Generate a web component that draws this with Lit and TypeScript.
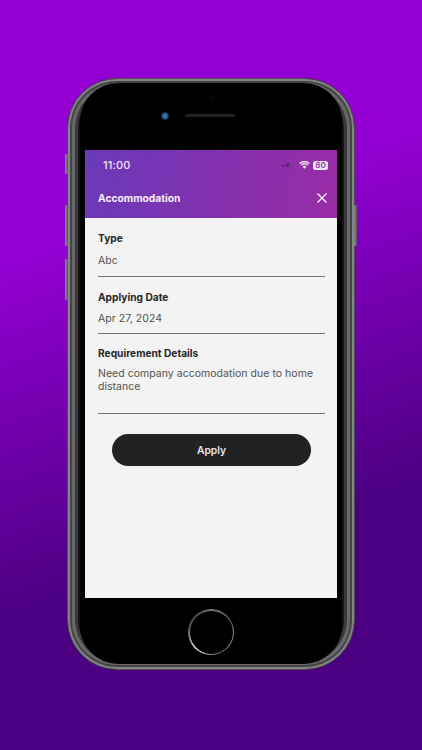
import { LitElement, html, css } from "lit";
import { customElement } from "lit/decorators.js";

@customElement("app-root")
export class AppRoot extends LitElement {
  static styles = css`
    :host {
      display: block;
      width: 422px;
      height: 750px;
      overflow: hidden;
      background: linear-gradient(162deg, #9400d3 0%, #9400d3 30%, #4b0082 70%, #4b0082 100%);
      font-family: Inter, "Open Sans", sans-serif;
    }
    .page { display: flex; justify-content: center; padding-top: 78px; }
    .phone {
      position: relative;
      box-sizing: border-box;
      width: 288px;
      height: 592px;
      border-radius: 50px;
      background: #000;
      border: 1px solid #4e4e50;
      box-shadow: inset 0 0 0 2px #858587, inset 0 0 0 4px #454547, inset 0 0 0 7px #68686a, inset 0 0 0 10px #3a3a3c, inset 0 0 0 12px #141414;
      padding: 71px 17px 0;
    }
    .phone::before {
      content: "";
      position: absolute;
      left: 12px;
      right: 12px;
      top: 4px;
      bottom: 5px;
      border-radius: 38px;
      background: #000;
    }
    .btn {
      position: absolute;
      width: 3px;
      background: linear-gradient(90deg, #8b8b90, #55555a);
      border-radius: 1px;
    }
    .b1 { left: -3px; top: 75px; height: 20px; }
    .b2 { left: -3px; top: 126px; height: 41px; }
    .b3 { left: -3px; top: 180px; height: 41px; }
    .b4 { right: -3px; top: 126px; height: 41px; }
    .cam {
      position: absolute; left: 93px; top: 33px; width: 8px; height: 8px;
      border-radius: 50%;
      background: radial-gradient(circle, #3a78b0 0 25%, #10243a 70%);
    }
    .speaker {
      position: absolute; left: 117px; top: 35px; width: 50px; height: 3px;
      border-radius: 2px; background: #222223;
    }
    .dot {
      position: absolute; left: 141px; top: 16px; width: 4px; height: 4px;
      border-radius: 50%; background: #060608; border: 1px solid #0e0e10;
    }
    .home {
      position: absolute; left: 120px; bottom: 14px; width: 46px; height: 46px;
      box-sizing: border-box; border-radius: 50%;
      background: conic-gradient(#777 0deg, #555 60deg, #aaa 110deg, #777 150deg, #999 190deg, #ddd 225deg, #555 280deg, #444 330deg, #777 360deg);
    }
    .home::after {
      content: ""; position: absolute; inset: 1.5px; border-radius: 50%; background: #000;
    }
    .screen {
      position: relative;
      width: 252px; height: 448px; background: #f3f3f3; display: flex; flex-direction: column;
    }
    .head {
      height: 68px; box-sizing: border-box;
      background: linear-gradient(100deg, #6a3ab8 0%, #8430ae 55%, #9a2ca6 100%);
      color: #fff; padding: 9px 9px 0 13px;
      display: flex; flex-direction: column;
    }
    .status { display: flex; align-items: center; height: 12px; padding-left: 5px; gap: 3px; }
    .time { font-size: 11px; font-weight: 500; flex: 1; letter-spacing: 0.2px; color: #ece6f5; }
    .bars { display: flex; align-items: flex-end; gap: 1px; height: 4px; margin-right: 5px; }
    .bars i { width: 1.5px; background: #4a2a6a; display: block; }
    .h2 { height: 2px; }
    .h3 { height: 3px; }
    .h4 { height: 4px; }
    .faint { height: 1px; opacity: 0.5; }
    .battery {
      font-size: 8px; font-weight: 600; color: #8a3ab0; background: #f1e4f4;
      border-radius: 2.5px; width: 15px; height: 9px; line-height: 9px; text-align: center;
    }
    .title-row { display: flex; align-items: center; justify-content: space-between; margin-top: 21px; }
    .title { font-size: 10.3px; font-weight: 700; letter-spacing: -0.02px; color: #f4eef8; }
    .close { width: 12px; height: 12px; display: block; }
    .form { padding: 14px 12px 0 13px; display: flex; flex-direction: column; }
    .field { border-bottom: 1px solid #747474; }
    .label { font-size: 10.2px; font-weight: 700; color: #282828; line-height: 13px; }
    .value { font-size: 10.5px; color: #525252; line-height: 13px; letter-spacing: 0.03px; }
    .f1 { height: 44px; }
    .f1 .value { margin-top: 9px; }
    .f2 { height: 42px; margin-top: 14px; }
    .f2 .value { margin-top: 8px; }
    .f3 { height: 66px; margin-top: 13px; }
    .f3 .value { margin-top: 7px; }
    .apply {
      margin: 20px 26px 0 27px; height: 32px; border-radius: 16px; background: #222;
      color: #e8e8e8; font-size: 10.3px; font-weight: 600;
      display: flex; align-items: center; justify-content: center;
    }
  `;

  render() {
    return html`
      <div class="page">
        <div class="phone">
          <div class="btn b1"></div>
          <div class="btn b2"></div>
          <div class="btn b3"></div>
          <div class="btn b4"></div>
          <div class="dot"></div>
          <div class="cam"></div>
          <div class="speaker"></div>
          <div class="screen">
            <div class="head">
              <div class="status">
                <span class="time">11:00</span>
                <span class="bars"><i class="h2"></i><i class="h3"></i><i class="h4"></i><i class="faint"></i></span>
                <svg width="11" height="8" viewBox="0 0 11 8">
                  <path d="M0.6 2.6A7 7 0 0 1 10.4 2.6M2.2 4.2A4.6 4.6 0 0 1 8.8 4.2" fill="none" stroke="#f4ecf7" stroke-width="1.4"/>
                  <path d="M5.5 7.8L3.6 5.7A2.8 2.8 0 0 1 7.4 5.7Z" fill="#f4ecf7"/>
                </svg>
                <span class="battery">80</span>
              </div>
              <div class="title-row">
                <span class="title">Accommodation</span>
                <svg class="close" viewBox="0 0 12 12"><path d="M1.5 1.5L10.5 10.5M10.5 1.5L1.5 10.5" stroke="#fff" stroke-width="1.2"/></svg>
              </div>
            </div>
            <div class="form">
              <div class="field f1"><div class="label">Type</div><div class="value">Abc</div></div>
              <div class="field f2"><div class="label">Applying Date</div><div class="value">Apr 27, 2024</div></div>
              <div class="field f3"><div class="label">Requirement Details</div><div class="value">Need company accomodation due to home distance</div></div>
            </div>
            <div class="apply">Apply</div>
          </div>
          <div class="home"></div>
        </div>
      </div>
    `;
  }
}
